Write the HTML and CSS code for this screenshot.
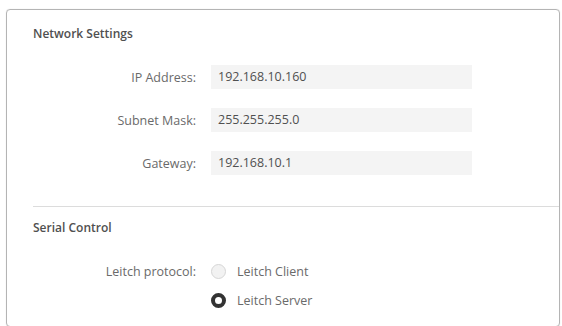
FILE: index.html
```html
<!DOCTYPE html>
<html lang="en">
<head>
    <meta charset="UTF-8">
    <title>Network Settings</title>
    <link rel="stylesheet" href="styles.css">
</head>
<body>
    <div class="panel">
        <div class="section">
            <h3 class="title">Network Settings</h3>
            <div class="rows">
                <label class="label">IP Address:</label>
                <div class="field">192.168.10.160</div>
                <label class="label">Subnet Mask:</label>
                <div class="field">255.255.255.0</div>
                <label class="label">Gateway:</label>
                <div class="field">192.168.10.1</div>
            </div>
        </div>
        <div class="section serial">
            <h3 class="title">Serial Control</h3>
            <div class="rows radios">
                <label class="label">Leitch protocol:</label>
                <div class="option"><span class="radio"></span>Leitch Client</div>
                <span></span>
                <div class="option"><span class="radio on"></span>Leitch Server</div>
            </div>
        </div>
    </div>
</body>
</html>
```

FILE: styles.css
```css
body {
    margin: 0;
    background-color: white;
    font-family: "Open Sans", "DejaVu Sans", sans-serif;
    overflow: hidden;
}
.panel {
    margin: 9px 0 0 6px;
    width: 552px;
    height: 316px;
    border: 1px solid #b4b4b4;
    border-radius: 4px;
    box-shadow: 0 0 1px #cfcfcf;
}
.section {
    padding: 16px 0 31px 26px;
}
.title {
    margin: 0;
    font-size: 12px;
    line-height: 16px;
    font-weight: 600;
    color: #505050;
}
.rows {
    display: grid;
    grid-template-columns: 163px 261px;
    column-gap: 15px;
    row-gap: 19px;
    align-items: center;
    margin-top: 23px;
}
.label {
    text-align: right;
    font-size: 12.5px;
    color: #6a6a6a;
}
.field {
    height: 24px;
    line-height: 24px;
    padding-left: 7px;
    background-color: #f4f4f4;
    font-size: 12.5px;
    color: #505050;
}
.serial {
    border-top: 1px solid #dcdcdc;
    padding-top: 13px;
    margin-left: 26px;
    padding-left: 0;
}
.radios {
    margin-top: 25px;
    row-gap: 9px;
}
.option {
    display: flex;
    align-items: center;
    height: 20px;
    font-size: 12.5px;
    color: #6a6a6a;
}
.radio {
    box-sizing: border-box;
    width: 15px;
    height: 15px;
    margin-right: 11px;
    border: 1px solid #d6d6d6;
    border-radius: 50%;
    background-color: #f2f2f2;
}
.radio.on {
    border: 4px solid #333;
    background-color: white;
}
```
